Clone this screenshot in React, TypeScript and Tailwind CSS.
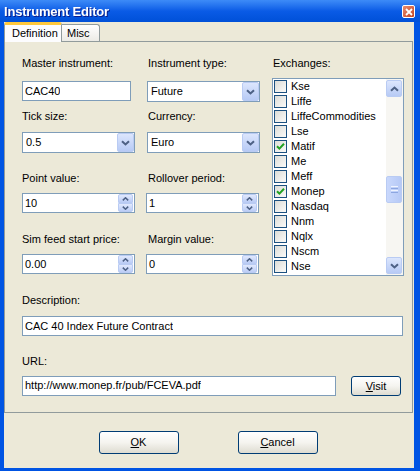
import type { ReactNode } from 'react'

const EXCHANGES: { name: string; checked?: boolean }[] = [
  { name: 'Kse' },
  { name: 'Liffe' },
  { name: 'LiffeCommodities' },
  { name: 'Lse' },
  { name: 'Matif', checked: true },
  { name: 'Me' },
  { name: 'Meff' },
  { name: 'Monep', checked: true },
  { name: 'Nasdaq' },
  { name: 'Nnm' },
  { name: 'Nqlx' },
  { name: 'Nscm' },
  { name: 'Nse' },
]

function Chevron({ dir = 'down' }: { dir?: 'up' | 'down' }) {
  return (
    <svg width="9" height="6" viewBox="0 0 9 6" className={dir === 'up' ? 'rotate-180' : ''}>
      <path d="M1 1.2 L4.5 4.5 L8 1.2" fill="none" stroke="#4D6185" strokeWidth="2" />
    </svg>
  )
}

function SmallChevron({ dir }: { dir: 'up' | 'down' }) {
  return (
    <svg width="7" height="4" viewBox="0 0 7 4" className={dir === 'up' ? 'rotate-180' : ''}>
      <path d="M0.8 0.6 L3.5 3.2 L6.2 0.6" fill="none" stroke="#4D6185" strokeWidth="1.5" />
    </svg>
  )
}

function TextBox({ value, w }: { value: string; w: string }) {
  return (
    <div className={`${w} h-[20px] border border-[#7F9DB9] bg-white flex items-center px-[2px]`}>
      <span className="truncate">{value}</span>
    </div>
  )
}

function Combo({ value }: { value: string }) {
  return (
    <div className="w-[113px] h-[21px] border border-[#7F9DB9] bg-white flex items-center">
      <span className="flex-1 pl-[3px] truncate">{value}</span>
      <div className="w-[17px] h-[19px] mr-[0px] rounded-[2px] border border-[#B9CBF3] bg-gradient-to-b from-[#DCE6FD] to-[#B7CAF5] flex items-center justify-center">
        <Chevron />
      </div>
    </div>
  )
}

function Spin({ value }: { value: string }) {
  return (
    <div className="w-[113px] h-[20px] border border-[#7F9DB9] bg-white flex items-center">
      <span className="flex-1 pl-[2px] truncate">{value}</span>
      <div className="w-[15px] h-[18px] mr-[1px] flex flex-col gap-[0px]">
        <div className="flex-1 rounded-t-[2px] border border-[#B9CBF3] bg-gradient-to-b from-[#E1E9FD] to-[#BCCDF6] flex items-center justify-center">
          <SmallChevron dir="up" />
        </div>
        <div className="flex-1 rounded-b-[2px] border border-[#B9CBF3] bg-gradient-to-b from-[#E1E9FD] to-[#BCCDF6] flex items-center justify-center">
          <SmallChevron dir="down" />
        </div>
      </div>
    </div>
  )
}

function Label({ children, className = '' }: { children: ReactNode; className?: string }) {
  return <div className={`leading-[13px] h-[13px] whitespace-nowrap ${className}`}>{children}</div>
}

function CheckBox({ checked }: { checked?: boolean }) {
  return (
    <div className="w-[13px] h-[13px] border border-[#1C5180] bg-gradient-to-br from-[#DCDCD7] to-[#FBFBF9] flex items-center justify-center">
      {checked && (
        <svg width="9" height="9" viewBox="0 0 9 9">
          <path d="M1 4.2 L3.4 6.6 L8 1.8" fill="none" stroke="#21A121" strokeWidth="2" />
        </svg>
      )}
    </div>
  )
}

function XPButton({ children, w = 'w-[80px]', h = 'h-[23px]' }: { children: ReactNode; w?: string; h?: string }) {
  return (
    <div className={`${w} ${h} rounded-[3px] border border-[#003C74] bg-gradient-to-b from-white via-[#F5F4EF] to-[#DEDCD1] flex items-center justify-center`}>
      {children}
    </div>
  )
}

export default function App() {
  return (
    <div className="w-[420px] h-[471px] bg-[#0054E3] flex flex-col font-['Liberation_Sans',Arial,sans-serif] text-[11px] text-black overflow-hidden">
      {/* Title bar */}
      <div className="h-[22px] shrink-0 bg-gradient-to-b from-[#3D8BF7] via-[#0A5BE6] to-[#0050D8] flex items-center justify-between pl-[4px] pr-[5px]">
        <span className="text-white font-bold text-[13px] leading-none tracking-[-0.2px] drop-shadow-[1px_1px_0_#0A1E8C]">
          Instrument Editor
        </span>
        <div className="w-[13px] h-[13px] mt-[1px] rounded-[2px] border border-white bg-gradient-to-br from-[#E88B6E] to-[#C2421F] flex items-center justify-center">
          <svg width="8" height="8" viewBox="0 0 8 8">
            <path d="M1 1 L7 7 M7 1 L1 7" stroke="white" strokeWidth="1.8" />
          </svg>
        </div>
      </div>

      {/* Client area */}
      <div className="ml-[4px] mr-[6px] mb-[3px] flex-1 bg-[#ECE9D8] flex flex-col">
        {/* Tabs */}
        <div className="h-[19px] flex items-end">
          <div className="w-[58px] h-[20px] -mb-[1px] z-10 bg-[#FCFCFE] border-x border-[#919B9C] border-t-[3px] border-t-[#FFC83C] rounded-t-[3px] flex items-center pl-[7px]">
            <span className="leading-none">Definition</span>
          </div>
          <div className="w-[38px] h-[17px] bg-gradient-to-b from-white to-[#ECEBE6] border-t border-r border-[#919B9C] rounded-tr-[3px] flex items-center pl-[5px]">
            <span className="leading-none">Misc</span>
          </div>
        </div>

        {/* Tab page */}
        <div className="w-[409px] h-[372px] border border-[#919B9C] bg-[#ECE9D8] pt-[15px] pl-[17px] flex flex-col">
          <div className="flex">
            {/* Left fields */}
            <div className="flex flex-col">
              <div className="grid grid-cols-[113px_113px] gap-x-[12px]">
                <div>
                  <Label>Master instrument:</Label>
                  <div className="mt-[11px]"><TextBox value="CAC40" w="w-[109px]" /></div>
                </div>
                <div>
                  <Label className="pl-[1px]">Instrument type:</Label>
                  <div className="mt-[11px]"><Combo value="Future" /></div>
                </div>
              </div>
              <div className="grid grid-cols-[113px_113px] gap-x-[12px] mt-[8px]">
                <div>
                  <Label>Tick size:</Label>
                  <div className="mt-[9px]"><Combo value="0.5" /></div>
                </div>
                <div>
                  <Label className="pl-[1px]">Currency:</Label>
                  <div className="mt-[9px]"><Combo value="Euro" /></div>
                </div>
              </div>
              <div className="grid grid-cols-[113px_113px] gap-x-[11px] mt-[19px]">
                <div>
                  <Label>Point value:</Label>
                  <div className="mt-[8px]"><Spin value="10" /></div>
                </div>
                <div>
                  <Label className="pl-[2px]">Rollover period:</Label>
                  <div className="mt-[8px]"><Spin value="1" /></div>
                </div>
              </div>
              <div className="grid grid-cols-[113px_113px] gap-x-[11px] mt-[20px]">
                <div>
                  <Label>Sim feed start price:</Label>
                  <div className="mt-[8px]"><Spin value="0.00" /></div>
                </div>
                <div>
                  <Label className="pl-[2px]">Margin value:</Label>
                  <div className="mt-[8px]"><Spin value="0" /></div>
                </div>
              </div>
            </div>

            {/* Exchanges */}
            <div className="ml-[12px] flex flex-col">
              <Label className="pl-[1px]">Exchanges:</Label>
              <div className="mt-[8px] w-[132px] h-[198px] border border-[#7F9DB9] bg-white flex">
                <div className="flex-1 flex flex-col">
                  {EXCHANGES.map((ex) => (
                    <div key={ex.name} className="h-[15px] flex items-center pl-[1px]">
                      <CheckBox checked={ex.checked} />
                      <span className="ml-[4px] leading-none">{ex.name}</span>
                    </div>
                  ))}
                </div>
                <div className="w-[17px] flex flex-col bg-[#F7F6F2] py-[1px] pr-[1px]">
                  <div className="h-[17px] rounded-[2px] border border-[#B9CBF3] bg-gradient-to-b from-[#DCE6FD] to-[#B7CAF5] flex items-center justify-center">
                    <Chevron dir="up" />
                  </div>
                  <div className="flex-1 pt-[79px]">
                    <div className="h-[27px] rounded-[2px] border border-[#B9CBF3] bg-gradient-to-r from-[#C9D8FC] to-[#B6C9F6] flex flex-col items-center justify-center gap-[1px]">
                      <div className="w-[7px] h-[1px] bg-[#EEF3FE]" />
                      <div className="w-[7px] h-[1px] bg-[#8CA6E0]" />
                      <div className="w-[7px] h-[1px] bg-[#EEF3FE]" />
                      <div className="w-[7px] h-[1px] bg-[#8CA6E0]" />
                    </div>
                  </div>
                  <div className="h-[17px] rounded-[2px] border border-[#B9CBF3] bg-gradient-to-b from-[#DCE6FD] to-[#B7CAF5] flex items-center justify-center">
                    <Chevron />
                  </div>
                </div>
              </div>
            </div>
          </div>

          {/* Description */}
          <Label className="mt-[18px]">Description:</Label>
          <div className="mt-[9px]"><TextBox value="CAC 40 Index Future Contract" w="w-[381px]" /></div>

          {/* URL */}
          <Label className="mt-[19px]">URL:</Label>
          <div className="mt-[7px] flex items-center">
            <TextBox value="http://www.monep.fr/pub/FCEVA.pdf" w="w-[314px]" />
            <div className="ml-[15px] mt-[1px]">
              <XPButton w="w-[50px]" h="h-[20px]">
                <span><span className="underline">V</span>isit</span>
              </XPButton>
            </div>
          </div>
        </div>

        {/* Dialog buttons */}
        <div className="mt-[18px] flex justify-center gap-[59px] pr-[2px]">
          <XPButton>
            <span><span className="underline">O</span>K</span>
          </XPButton>
          <XPButton>
            <span><span className="underline">C</span>ancel</span>
          </XPButton>
        </div>
      </div>
    </div>
  )
}
